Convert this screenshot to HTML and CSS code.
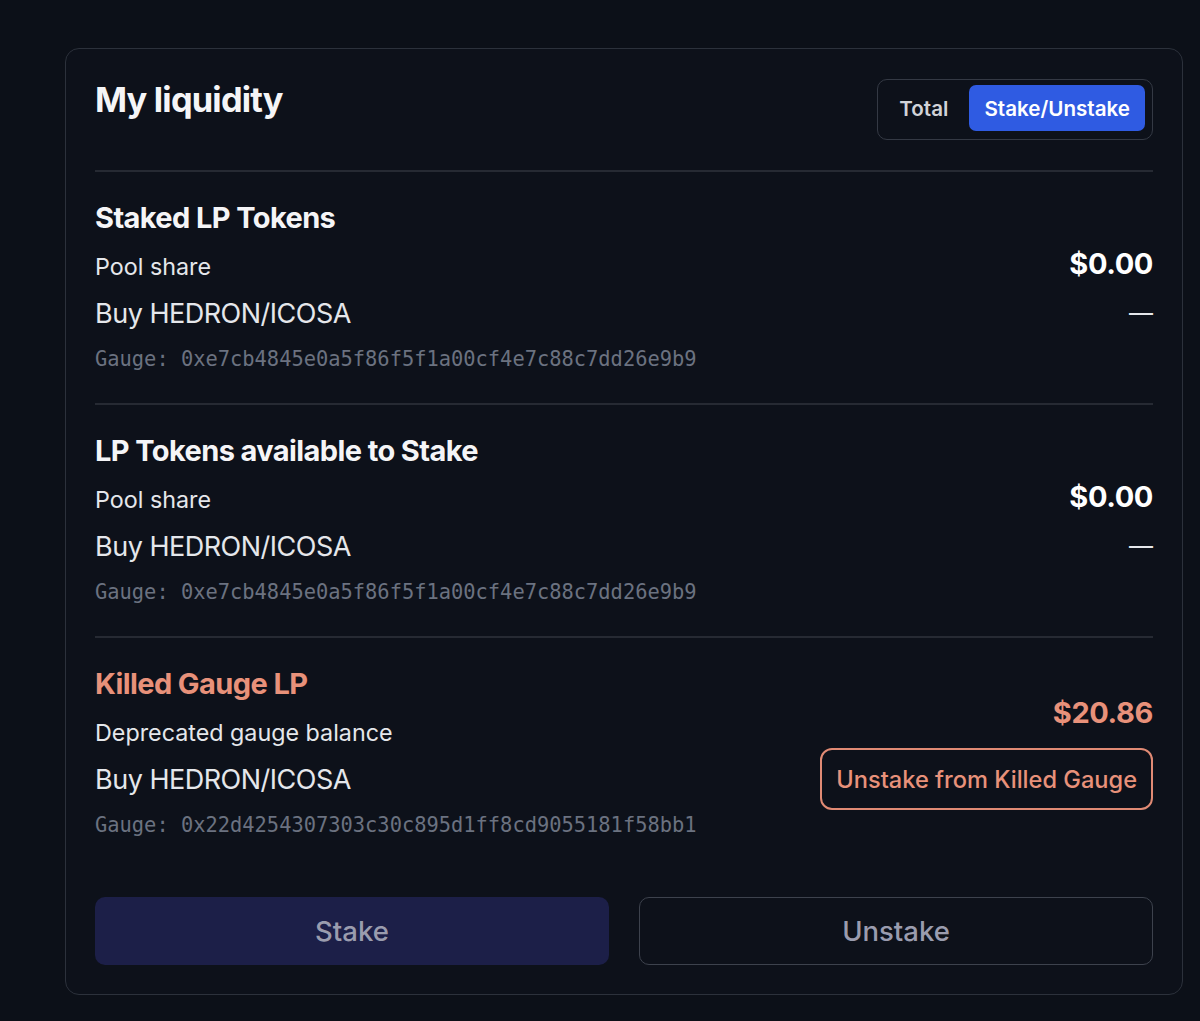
FILE: index.html
```html
<!DOCTYPE html>
<html>
<head>
<meta charset="utf-8">
<link rel="stylesheet" href="styles.css">
</head>
<body>
<div class="page">
  <section class="card">
    <header class="card-head">
      <h1 class="title">My liquidity</h1>
      <div class="toggle">
        <button class="toggle-btn">Total</button>
        <button class="toggle-btn active">Stake/Unstake</button>
      </div>
    </header>

    <div class="group">
      <h2 class="group-title">Staked LP Tokens</h2>
      <div class="row row-share">
        <span class="label">Pool share</span>
        <span class="value">$0.00</span>
      </div>
      <div class="row row-pair">
        <span class="pair">Buy HEDRON/ICOSA</span>
        <span class="dash">—</span>
      </div>
      <div class="gauge">Gauge: 0xe7cb4845e0a5f86f5f1a00cf4e7c88c7dd26e9b9</div>
    </div>

    <div class="group">
      <h2 class="group-title">LP Tokens available to Stake</h2>
      <div class="row row-share">
        <span class="label">Pool share</span>
        <span class="value">$0.00</span>
      </div>
      <div class="row row-pair">
        <span class="pair">Buy HEDRON/ICOSA</span>
        <span class="dash">—</span>
      </div>
      <div class="gauge">Gauge: 0xe7cb4845e0a5f86f5f1a00cf4e7c88c7dd26e9b9</div>
    </div>

    <div class="group killed">
      <div class="killed-left">
        <h2 class="group-title warn">Killed Gauge LP</h2>
        <div class="label">Deprecated gauge balance</div>
        <div class="pair">Buy HEDRON/ICOSA</div>
        <div class="gauge">Gauge: 0x22d4254307303c30c895d1ff8cd9055181f58bb1</div>
      </div>
      <div class="killed-right">
        <span class="value warn">$20.86</span>
        <button class="killed-btn">Unstake from Killed Gauge</button>
      </div>
    </div>

    <div class="actions">
      <button class="action stake">Stake</button>
      <button class="action unstake">Unstake</button>
    </div>
  </section>
</div>
</body>
</html>
```

FILE: styles.css
```css
* { box-sizing: border-box; }
html, body {
  margin: 0;
  padding: 0;
  background: #0c1018;
  font-family: Inter, "Noto Sans", sans-serif;
  color: #f3f4f6;
}
.page {
  padding: 48px 17px 26px 65px;
}
.card {
  width: 1118px;
  border: 1.5px solid #2c313b;
  border-radius: 14px;
  padding: 29px 29px 29px 29px;
  background: #0d111a;
}
.card-head {
  display: flex;
  justify-content: space-between;
  align-items: flex-start;
  padding-bottom: 30px;
  border-bottom: 2px solid #262a33;
}
.title {
  margin: 0;
  font-size: 34.4px;
  font-weight: 700;
  letter-spacing: -0.8px;
  line-height: 44px;
  color: #f5f5f7;
}
.toggle {
  display: flex;
  gap: 6px;
  margin-top: 1px;
  padding: 5px 7px 8px 6px;
  border: 1.5px solid #343944;
  border-radius: 10px;
}
.toggle-btn {
  font-family: inherit;
  font-size: 20.6px;
  font-weight: 600;
  border: 0;
  background: transparent;
  color: #d1d3d8;
  padding: 0 15px;
  height: 46px;
  border-radius: 7px;
}
.toggle-btn.active {
  background: #2f5be2;
  color: #ffffff;
}
.group {
  padding: 29px 0 26px;
  border-bottom: 2px solid #262a33;
}
.group-title {
  margin: 0 0 8px;
  font-size: 29px;
  font-weight: 700;
  letter-spacing: -0.6px;
  line-height: 34px;
  color: #f5f5f7;
}
.row {
  display: flex;
  justify-content: space-between;
  align-items: center;
}
.row-share { height: 48px; }
.row-pair { height: 46px; }
.label {
  font-size: 23.3px;
  color: #e5e7eb;
  line-height: 48px;
}
.pair {
  font-size: 27px;
  color: #e5e7eb;
  letter-spacing: -0.5px;
  line-height: 46px;
}
.value {
  font-size: 29px;
  font-weight: 700;
  color: #ffffff;
  letter-spacing: -0.4px;
  line-height: 36px;
  margin-top: -6px;
}
.dash {
  font-size: 24px;
  color: #e5e7eb;
  margin-top: -3px;
}
.gauge {
  font-family: "DejaVu Sans Mono", monospace;
  font-size: 20.4px;
  color: #6b7280;
  line-height: 40px;
  padding-top: 2px;
  margin-bottom: -2px;
}
.warn { color: #e8917a; }
.killed {
  display: flex;
  justify-content: space-between;
  align-items: flex-start;
  border-bottom: 0;
  padding-bottom: 0;
}
.killed-right {
  display: flex;
  flex-direction: column;
  align-items: flex-end;
  gap: 17px;
  margin-top: 28px;
}
.killed-right .value { margin-top: 0; }
.killed-btn {
  font-family: inherit;
  font-size: 23.6px;
  font-weight: 500;
  color: #e8917a;
  background: transparent;
  border: 2px solid #e08a74;
  border-radius: 12px;
  padding: 0 14px;
  height: 62px;
}
.actions {
  display: grid;
  grid-template-columns: 1fr 1fr;
  gap: 30px;
  padding-top: 54px;
}
.action {
  font-family: inherit;
  font-size: 27.5px;
  font-weight: 500;
  height: 68px;
  border-radius: 10px;
  color: #9a9cae;
}
.action.stake {
  background: #1c1f48;
  border: 0;
}
.action.unstake {
  background: transparent;
  border: 1.5px solid #3d424d;
}
```
